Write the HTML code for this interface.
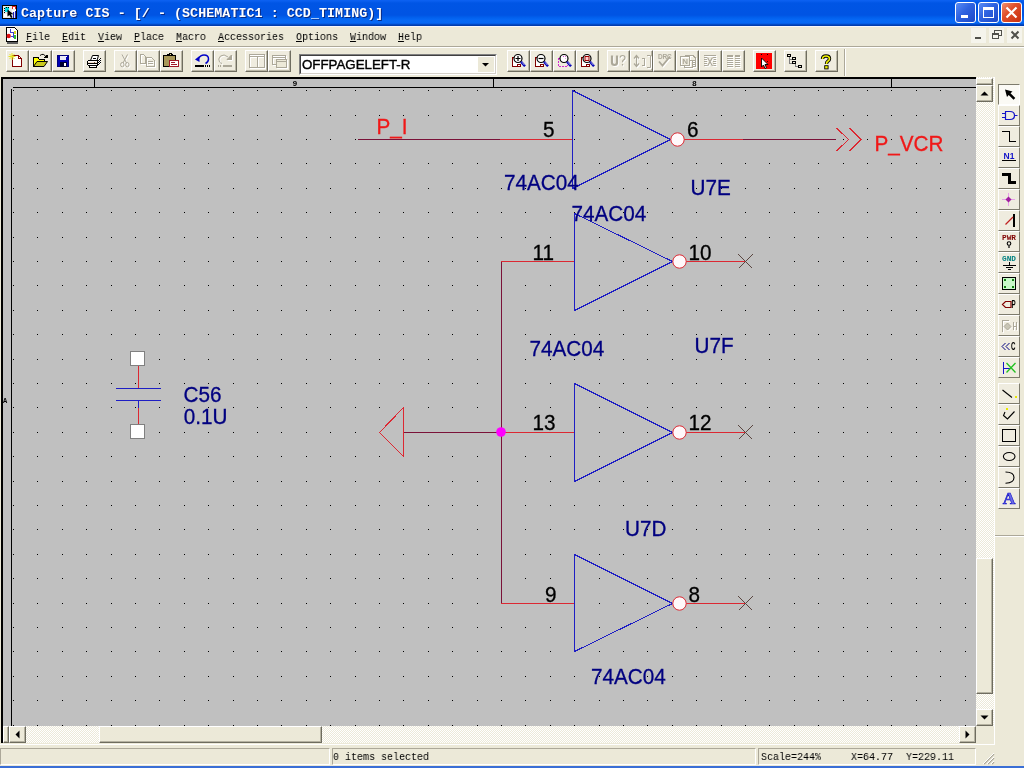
<!DOCTYPE html><html><head><meta charset="utf-8"><title>Capture CIS</title><style>
*{margin:0;padding:0;box-sizing:border-box}
html,body{width:1024px;height:768px;overflow:hidden;background:#ece9d8}
body{position:relative;font-family:"Liberation Mono","Noto Sans CJK SC",monospace;font-size:12px;color:#000}
.abs{position:absolute}
#title{left:0;top:0;width:1024px;height:26px;background:linear-gradient(to bottom,#0c62f3 0,#0a5eee 1px,#0055e5 3px,#0054e3 15px,#0262ef 18px,#0668f5 20px,#0567f4 23px,#0456dc 24px,#003cae 25px,#003cae 26px)}
#title .t{will-change:transform;left:21px;top:6px;color:#fff;font-weight:bold;font-size:13.33px;letter-spacing:.055px;line-height:16px;white-space:pre;text-shadow:1px 1px 0 #0a2a80}
.mi{will-change:transform;top:30px;height:14px;line-height:14px;font-size:11.5px;white-space:pre;transform:scaleX(.8696);transform-origin:0 0}
.mi u{text-decoration:underline;text-underline-offset:1px;text-decoration-thickness:1px}
.b{will-change:transform;position:absolute;top:50px;width:23px;height:22px;border-left:1px solid #fff;border-top:1px solid #fff;border-right:1px solid #6f6d60;border-bottom:1px solid #6f6d60;background:#efecdf;box-shadow:inset -1px -1px 0 #b9b6a5}
.b svg{position:absolute;left:2px;top:2px;width:17px;height:16px;overflow:visible}
.pb{will-change:transform;position:absolute;left:998px;width:22px;height:21px;border-left:1px solid #fff;border-top:1px solid #fff;border-right:1px solid #7d7b6d;border-bottom:1px solid #7d7b6d;background:#efecdf}
.pb svg{position:absolute;left:2px;top:1px;width:16px;height:16px;overflow:visible}
.sb{background:#ece9d8;border-left:1px solid #fff;border-top:1px solid #fff;border-right:1px solid #6e6c5f;border-bottom:1px solid #6e6c5f;box-shadow:inset -1px -1px 0 #b5b2a1}
.st{will-change:transform;top:750px;height:14px;line-height:14px;font-size:11.5px;white-space:pre;transform:scaleX(.8696);transform-origin:0 0}
svg text{font-family:"Liberation Sans",sans-serif}
</style></head><body>
<div id="title" class="abs"><div class="abs t">Capture CIS - [/ - (SCHEMATIC1 : CCD_TIMING)]</div>
<svg class="abs" style="left:2px;top:5px" width="15" height="14" viewBox="2 5 15 14" shape-rendering="crispEdges"><rect x="2.500" y="5.500" width="14" height="13" fill="#e8e8e8" stroke="#000"/><rect x="5" y="7" width="4" height="5" fill="#00e0e8"/><path d="M4 8h1M4 10h1M4 12h1M6 6.500v1M8 6.500v1" stroke="#000"/><rect x="12" y="6" width="4" height="3" fill="#e02020"/><rect x="13" y="7" width="2" height="2" fill="#fff"/><rect x="12" y="10" width="4" height="2" fill="#fff"/><rect x="13" y="12" width="1" height="6" fill="#2020c0"/><rect x="15" y="11" width="1" height="7" fill="#2020c0"/><path d="M7.500 9.500v7l2-1.500l1.500 3l1.500-.700l-1.500-3h2.500z" fill="#000" shape-rendering="geometricPrecision"/><rect x="4" y="14" width="3" height="3" fill="#fff"/></svg><div class="abs" style="left:955px;top:2px;width:21px;height:21px;border:1px solid #fff;border-radius:3px;background:linear-gradient(135deg,#5a8cf5 0,#2e62e0 45%,#1c48c8 100%)"><div class="abs" style="left:5px;top:12px;width:7px;height:3px;background:#fff"></div></div><div class="abs" style="left:978px;top:2px;width:21px;height:21px;border:1px solid #fff;border-radius:3px;background:linear-gradient(135deg,#5a8cf5 0,#2e62e0 45%,#1c48c8 100%)"><div class="abs" style="left:4px;top:4px;width:11px;height:11px;border:1px solid #fff;border-top-width:3px"></div></div><div class="abs" style="left:1001px;top:2px;width:21px;height:21px;border:1px solid #fff;border-radius:3px;background:linear-gradient(135deg,#f09070 0,#e0502c 40%,#c83010 100%)"><svg class="abs" style="left:0;top:0" width="19" height="19"><path d="M4.500 4.500l10 10M14.500 4.500l-10 10" stroke="#fff" stroke-width="2.200"/></svg></div>
</div>
<div class="abs" style="left:0;top:26px;width:1024px;height:1px;background:#f6f6fb"></div><div class="abs" style="left:0;top:27px;width:1024px;height:19px;background:#ece9d8"></div>
<svg class="abs" style="left:5px;top:27px" width="14" height="17" viewBox="5 27 14 17" shape-rendering="crispEdges"><rect x="7" y="42" width="11" height="2" fill="#606060"/><path d="M6.500 27.500h8l2.500 2.500v11.500h-10.500z" fill="#fff" stroke="#000"/><circle cx="8.700" cy="36" r="2.200" fill="#e01010" shape-rendering="geometricPrecision"/><path d="M10.500 29v3h2.500v6M11 36h2" fill="none" stroke="#4040d0"/><rect x="14" y="31" width="2" height="3" fill="#d8d820"/><rect x="14" y="35" width="2" height="4" fill="#30c030"/></svg>
<div class="abs mi" style="left:26px"><u>F</u>ile</div>
<div class="abs mi" style="left:62px"><u>E</u>dit</div>
<div class="abs mi" style="left:98px"><u>V</u>iew</div>
<div class="abs mi" style="left:134px"><u>P</u>lace</div>
<div class="abs mi" style="left:176px"><u>M</u>acro</div>
<div class="abs mi" style="left:218px"><u>A</u>ccessories</div>
<div class="abs mi" style="left:296px"><u>O</u>ptions</div>
<div class="abs mi" style="left:350px"><u>W</u>indow</div>
<div class="abs mi" style="left:398px"><u>H</u>elp</div>
<div class="abs" style="left:971px;top:28px;width:15px;height:15px;background:#f5f4ec"></div><div class="abs" style="left:989px;top:28px;width:15px;height:15px;background:#f5f4ec"></div><div class="abs" style="left:1007px;top:28px;width:15px;height:15px;background:#f5f4ec"></div><svg class="abs" style="left:970px;top:27px" width="54" height="18" viewBox="970 27 54 18" shape-rendering="crispEdges"><rect x="975" y="37" width="6" height="2" fill="#50504a"/><path d="M994.500 33v-2.500h6.500v5h-2" fill="none" stroke="#50504a"/><rect x="994" y="30" width="7" height="1" fill="#50504a"/><rect x="992.500" y="33.500" width="6" height="5" fill="none" stroke="#50504a"/><rect x="992" y="33" width="7" height="2" fill="#50504a"/><path d="M1011.500 31.500l7 7M1018.500 31.500l-7 7" stroke="#50504a" stroke-width="2" shape-rendering="geometricPrecision"/></svg>
<div class="abs" style="left:0;top:46px;width:1024px;height:1px;background:#aca899"></div>
<div class="abs" style="left:0;top:47px;width:1024px;height:1px;background:#fff"></div>
<div class="abs" style="left:0;top:48px;width:1024px;height:29px;background:#ece9d8"></div>
<div class="b" style="left:6px"><svg style="position:absolute;left:-1px;top:-1px;width:23px;height:22px" viewBox="6 50 23 22" shape-rendering="crispEdges"><path d="M12.5 55.5h6l3 3v8h-9z" fill="#fff" stroke="#800000"/><path d="M18.5 55.5v3h3" fill="none" stroke="#800000"/><rect x="18" y="64" width="3" height="2" fill="#fff"/><path d="M9.5 54l5 5M14.5 54l-5 5M12 53v7M8.5 56.5h7" stroke="#e6e61e" fill="none" shape-rendering="geometricPrecision"/></svg></div>
<div class="b" style="left:29px"><svg style="position:absolute;left:-1px;top:-1px;width:23px;height:22px" viewBox="29 50 23 22" shape-rendering="crispEdges"><path d="M33.5 66.5V57.5h4.5l1 1.5h5.5v3" fill="#ffff00" stroke="#000"/><path d="M33.5 66.5l3.5-5h10.500l-3.500 5z" fill="#c8c81e" stroke="#000" shape-rendering="geometricPrecision"/><path d="M40 55.500q3.500-3 6 1.500" fill="none" stroke="#000" shape-rendering="geometricPrecision"/><path d="M44 57.5h3.500v-3z" fill="#000"/></svg></div>
<div class="b" style="left:52px"><svg style="position:absolute;left:-1px;top:-1px;width:23px;height:22px" viewBox="52 50 23 22" shape-rendering="crispEdges"><rect x="57" y="55" width="12" height="12" fill="#0000b4"/><rect x="57" y="55" width="12" height="12" fill="none" stroke="#000078" stroke-width="1" transform="translate(.5,.5) scale(.9167)" transform-origin="57 55"/><rect x="60" y="56" width="6" height="4" fill="#e8e8f8"/><rect x="66" y="56" width="1" height="1" fill="#fff"/><rect x="60" y="62" width="7" height="5" fill="#000030"/><rect x="64" y="63" width="2" height="3" fill="#fff"/></svg></div>
<div class="b" style="left:83px"><svg style="position:absolute;left:-1px;top:-1px;width:23px;height:22px" viewBox="83 50 23 22" shape-rendering="crispEdges"><defs><pattern id="chk" width="2" height="2" patternUnits="userSpaceOnUse"><rect width="2" height="2" fill="#fff"/><rect width="1" height="1" fill="#000"/><rect x="1" y="1" width="1" height="1" fill="#000"/></pattern></defs><path d="M97 60.500l2.500-3h1.500v5.500l-3.500 4.500z" fill="url(#chk)"/><path d="M90.500 60.500l2-5h6l-1.500 5z" fill="#fff" stroke="#000" shape-rendering="geometricPrecision"/><rect x="93" y="58" width="3" height="1" fill="#000"/><path d="M88.500 60.500h9v5h-9l-1-1v-3z" fill="#fff" stroke="#000"/><rect x="88" y="62" width="9" height="1" fill="#f4e0d0"/><rect x="88" y="63" width="9" height="1" fill="#000"/><rect x="94" y="62" width="1" height="1" fill="#806040"/><rect x="89.500" y="65.500" width="7" height="2" fill="#fff" stroke="#000"/></svg></div>
<div class="b" style="left:114px"><svg style="position:absolute;left:-1px;top:-1px;width:23px;height:22px" viewBox="114 50 23 22" shape-rendering="crispEdges"><g shape-rendering="geometricPrecision"><g transform="translate(1,1)" fill="none" stroke="#fff"><path d="M122 54.500l4.500 8.500M127.500 54.500l-4.500 8.500"/><ellipse cx="122.300" cy="64.700" rx="1.700" ry="2.200"/><ellipse cx="127.300" cy="64.700" rx="1.700" ry="2.200"/></g><g fill="none" stroke="#aca899"><path d="M122 54.500l4.500 8.500M127.500 54.500l-4.500 8.500"/><ellipse cx="122.300" cy="64.700" rx="1.700" ry="2.200"/><ellipse cx="127.300" cy="64.700" rx="1.700" ry="2.200"/></g></g></svg></div>
<div class="b" style="left:137px"><svg style="position:absolute;left:-1px;top:-1px;width:23px;height:22px" viewBox="137 50 23 22" shape-rendering="crispEdges"><g transform="translate(1,1)" fill="none" stroke="#fff"><path d="M140.500 54.500h3l2 2v6.500h-5z"/><path d="M146.500 57.500h5l3 3v6h-8z"/><path d="M148 61.500h5M148 63.500h5"/></g><g fill="none" stroke="#aca899"><path d="M140.500 54.500h3l2 2v6.500h-5z"/><path d="M146.500 57.500h5l3 3v6h-8z"/><path d="M148 61.500h5M148 63.500h5"/></g></svg></div>
<div class="b" style="left:160px"><svg style="position:absolute;left:-1px;top:-1px;width:23px;height:22px" viewBox="160 50 23 22" shape-rendering="crispEdges"><rect x="163.500" y="55.500" width="12" height="11" fill="#a8985a" stroke="#000"/><path d="M167.500 55.500v-1.500h1.500v-1h2v1h1.500v1.500z" fill="#e8dca0" stroke="#000"/><rect x="169.500" y="60.500" width="9" height="6" fill="#fff" stroke="#a01828"/><path d="M171 62.500h4M171 64.500h6" stroke="#a01828"/></svg></div>
<div class="b" style="left:191px"><svg style="position:absolute;left:-1px;top:-1px;width:23px;height:22px" viewBox="191 50 23 22" shape-rendering="crispEdges"><g shape-rendering="geometricPrecision"><path d="M198.500 58.500q2-3.500 5.500-3.500q4.500 0 4.500 4q0 3-3 4.500" fill="none" stroke="#0000c8" stroke-width="1.500"/><path d="M195 59.500l4.500-3.500v6z" fill="#0000c8"/></g><rect x="195" y="65" width="9" height="2" fill="#000"/><rect x="205" y="65" width="1" height="2" fill="#000"/><rect x="207" y="65" width="1" height="2" fill="#000"/><rect x="209" y="65" width="1" height="2" fill="#000"/></svg></div>
<div class="b" style="left:214px"><svg style="position:absolute;left:-1px;top:-1px;width:23px;height:22px" viewBox="214 50 23 22" shape-rendering="crispEdges"><g shape-rendering="geometricPrecision"><g transform="translate(1,1)" fill="none" stroke="#fff"><path d="M228 57q-4-3.500-7.500-1q-3 3-1 6q1 1 2.500 1.500"/><path d="M231.500 55v4.500h-4.500z" fill="#aca899"/></g><g fill="none" stroke="#aca899"><path d="M228 57q-4-3.500-7.500-1q-3 3-1 6q1 1 2.500 1.500"/><path d="M231.500 55v4.500h-4.500z" fill="#aca899"/></g></g><rect x="223" y="65" width="9" height="2" fill="#aca899"/><rect x="218" y="65" width="1" height="2" fill="#aca899"/><rect x="220" y="65" width="1" height="2" fill="#aca899"/></svg></div>
<div class="b" style="left:245px"><svg style="position:absolute;left:-1px;top:-1px;width:23px;height:22px" viewBox="245 50 23 22" shape-rendering="crispEdges"><g transform="translate(1,1)" fill="none" stroke="#fff"><rect x="249.500" y="54.500" width="15" height="13"/><path d="M249 56h16M257.500 57v10"/></g><g fill="none" stroke="#aca899"><rect x="249.500" y="54.500" width="15" height="13"/><path d="M249 56h16M257.500 57v10"/></g></svg></div>
<div class="b" style="left:268px"><svg style="position:absolute;left:-1px;top:-1px;width:23px;height:22px" viewBox="268 50 23 22" shape-rendering="crispEdges"><g transform="translate(1,1)" fill="none" stroke="#fff"><rect x="272.500" y="55.500" width="13" height="9"/><path d="M272 57h14"/><rect x="276.500" y="59.500" width="10" height="8" fill="#ece9d8"/><path d="M276 61h11"/></g><g fill="none" stroke="#aca899"><rect x="272.500" y="55.500" width="13" height="9"/><path d="M272 57h14"/><rect x="276.500" y="59.500" width="10" height="8" fill="#ece9d8"/><path d="M276 61h11"/></g></svg></div>
<div class="b" style="left:507px"><svg style="position:absolute;left:-1px;top:-1px;width:23px;height:22px" viewBox="507 50 23 22" shape-rendering="crispEdges"><path d="M515 57.500h-2.500v9h8v-3" fill="#fff" stroke="#800000"/><rect x="517.5" y="64.500" width="3" height="2" fill="#fff" stroke="#800000"/><g shape-rendering="geometricPrecision"><circle cx="518" cy="58.500" r="4" fill="#fff" stroke="#000" stroke-width="1.200"/><path d="M515.500 58.500h5M518 56v5" stroke="#000" stroke-width="1.200"/><path d="M521 61.800l4 4.500" stroke="#0000b4" stroke-width="2.400" fill="none"/><path d="M522 62.300l2.500 2.800" stroke="#dcdcff" stroke-width=".8" fill="none"/></g></svg></div>
<div class="b" style="left:530px"><svg style="position:absolute;left:-1px;top:-1px;width:23px;height:22px" viewBox="530 50 23 22" shape-rendering="crispEdges"><path d="M538 57.500h-2.500v9h8v-3" fill="#fff" stroke="#800000"/><rect x="540.5" y="64.500" width="3" height="2" fill="#fff" stroke="#800000"/><g shape-rendering="geometricPrecision"><circle cx="541" cy="58.500" r="4" fill="#fff" stroke="#000" stroke-width="1.200"/><path d="M538.500 58.500h5" stroke="#000" stroke-width="1.200"/><path d="M544 61.800l4 4.500" stroke="#0000b4" stroke-width="2.400" fill="none"/><path d="M545 62.300l2.500 2.800" stroke="#dcdcff" stroke-width=".8" fill="none"/></g></svg></div>
<div class="b" style="left:553px"><svg style="position:absolute;left:-1px;top:-1px;width:23px;height:22px" viewBox="553 50 23 22" shape-rendering="crispEdges"><rect x="558.500" y="58.500" width="9" height="8" fill="none" stroke="#d028d0" stroke-dasharray="1.500 1.500"/><g shape-rendering="geometricPrecision"><circle cx="564" cy="58.500" r="4" fill="#fff" stroke="#000" stroke-width="1.200"/><path d="M563 56.500h2.500v2" stroke="#d040d0" stroke-width="1" stroke-dasharray="1 1" fill="none"/><path d="M567 61.800l4 4.500" stroke="#0000b4" stroke-width="2.400" fill="none"/><path d="M568 62.300l2.500 2.800" stroke="#dcdcff" stroke-width=".8" fill="none"/></g></svg></div>
<div class="b" style="left:576px"><svg style="position:absolute;left:-1px;top:-1px;width:23px;height:22px" viewBox="576 50 23 22" shape-rendering="crispEdges"><path d="M584 57.500h-2.500v9h8v-3" fill="#fff" stroke="#800000"/><rect x="586.5" y="64.500" width="3" height="2" fill="#fff" stroke="#800000"/><g shape-rendering="geometricPrecision"><circle cx="587" cy="58.500" r="4" fill="#fff" stroke="#000" stroke-width="1.200"/><rect x="585" y="56.500" width="4" height="4" fill="#ffd0d0" stroke="#a00000"/><path d="M590 61.800l4 4.500" stroke="#0000b4" stroke-width="2.400" fill="none"/><path d="M591 62.300l2.500 2.800" stroke="#dcdcff" stroke-width=".8" fill="none"/></g></svg></div>
<div class="b" style="left:607px"><svg style="position:absolute;left:-1px;top:-1px;width:23px;height:22px" viewBox="607 50 23 22" shape-rendering="crispEdges"><g shape-rendering="geometricPrecision"><g transform="translate(1,1)" fill="none" stroke="#fff"><path d="M612 55.500v7q0 2.500 2.500 2.500q2.500 0 2.500-2.500v-7" stroke-width="2.200"/><path d="M620 57.500q.5-2 2.500-2q2.500 0 2.500 2.200q0 1.500-1.500 2.300q-1 .7-1 2.200M622.500 64v1.500" stroke-width="1.200"/></g><g fill="none" stroke="#aca899"><path d="M612 55.500v7q0 2.500 2.500 2.500q2.500 0 2.500-2.500v-7" stroke-width="2.200"/><path d="M620 57.500q.5-2 2.500-2q2.500 0 2.500 2.200q0 1.500-1.500 2.300q-1 .7-1 2.200M622.500 64v1.500" stroke-width="1.200"/></g></g></svg></div>
<div class="b" style="left:630px"><svg style="position:absolute;left:-1px;top:-1px;width:23px;height:22px" viewBox="630 50 23 22" shape-rendering="crispEdges"><g shape-rendering="geometricPrecision"><g transform="translate(1,1)" fill="none" stroke="#fff"><path d="M636.500 56v10M634 58.500l2.500-3l2.500 3M634 63.500l2.500 3l2.500-3" stroke-width="1.200"/><path d="M642 58.500h3M642 65.500h3M644.500 58.500v7M647 55.500h3.500v12h-3.500"/></g><g fill="none" stroke="#aca899"><path d="M636.500 56v10M634 58.500l2.500-3l2.500 3M634 63.500l2.500 3l2.500-3" stroke-width="1.200"/><path d="M642 58.500h3M642 65.500h3M644.500 58.500v7M647 55.500h3.500v12h-3.500"/></g></g></svg></div>
<div class="b" style="left:653px"><svg style="position:absolute;left:-1px;top:-1px;width:23px;height:22px" viewBox="653 50 23 22" shape-rendering="crispEdges"><g shape-rendering="geometricPrecision"><g transform="translate(1,1)" fill="none" stroke="#fff"><path d="M659 61.500l3.500 4l7.500-9" stroke-width="1.800"/></g><g fill="none" stroke="#aca899"><path d="M659 61.500l3.500 4l7.500-9" stroke-width="1.800"/></g></g><text x="658" y="59" font-size="6.500" font-weight="bold" fill="#aca899" style="font-family:'Liberation Sans',sans-serif" letter-spacing="-.2">DRC</text></svg></div>
<div class="b" style="left:676px"><svg style="position:absolute;left:-1px;top:-1px;width:23px;height:22px" viewBox="676 50 23 22" shape-rendering="crispEdges"><g transform="translate(1,1)" fill="none" stroke="#fff"><path d="M685.500 56.500v-1.500h7l3 3v8.500h-3"/><rect x="680.500" y="56.500" width="9" height="9"/><path d="M689.500 60.500h3v7h-8v-2"/><path d="M693 60.500h2M693 62.500h2M693 64.500h2"/></g><g fill="none" stroke="#aca899"><path d="M685.500 56.500v-1.500h7l3 3v8.500h-3"/><rect x="680.500" y="56.500" width="9" height="9"/><path d="M689.500 60.500h3v7h-8v-2"/><path d="M693 60.500h2M693 62.500h2M693 64.500h2"/></g><text x="682.300" y="64" font-size="8" font-weight="bold" fill="#aca899" style="font-family:'Liberation Sans',sans-serif">N</text></svg></div>
<div class="b" style="left:699px"><svg style="position:absolute;left:-1px;top:-1px;width:23px;height:22px" viewBox="699 50 23 22" shape-rendering="crispEdges"><g transform="translate(1,1)" fill="none" stroke="#fff"><path d="M704 55.500h12M704 57.500h3M713 57.500h3M704 59.500h3M713 59.500h3M704 61.500h3M713 61.500h3M704 63.500h3M713 63.500h3M704 65.500h3M713 65.500h3"/></g><g fill="none" stroke="#aca899"><path d="M704 55.500h12M704 57.500h3M713 57.500h3M704 59.500h3M713 59.500h3M704 61.500h3M713 61.500h3M704 63.500h3M713 63.500h3M704 65.500h3M713 65.500h3"/></g><g shape-rendering="geometricPrecision"><g transform="translate(1,1)" fill="none" stroke="#fff"><path d="M707.500 57.500l5 8.500M712.500 57.500l-5 8.500" stroke-width="1.200"/></g><g fill="none" stroke="#aca899"><path d="M707.500 57.500l5 8.500M712.500 57.500l-5 8.500" stroke-width="1.200"/></g></g></svg></div>
<div class="b" style="left:722px"><svg style="position:absolute;left:-1px;top:-1px;width:23px;height:22px" viewBox="722 50 23 22" shape-rendering="crispEdges"><g transform="translate(1,1)" fill="none" stroke="#fff"><path d="M727 55.500h5.500M734.500 55.500h5.500M727 56.500h5.500M734.500 56.500h5.500M727 58.500h5.500M734.500 58.500h5.500M727 60.500h5.500M734.500 60.500h5.500M727 62.500h5.500M734.500 62.500h5.500M727 64.500h5.500M734.500 64.500h5.500M727 66.500h5.500M734.500 66.500h5.500"/></g><g fill="none" stroke="#aca899"><path d="M727 55.500h5.500M734.500 55.500h5.500M727 56.500h5.500M734.500 56.500h5.500M727 58.500h5.500M734.500 58.500h5.500M727 60.500h5.500M734.500 60.500h5.500M727 62.500h5.500M734.500 62.500h5.500M727 64.500h5.500M734.500 64.500h5.500M727 66.500h5.500M734.500 66.500h5.500"/></g></svg></div>
<div class="b" style="left:753px"><svg style="position:absolute;left:-1px;top:-1px;width:23px;height:22px" viewBox="753 50 23 22" shape-rendering="crispEdges"><rect x="756" y="53" width="16" height="16" fill="#ff0000"/><rect x="761" y="54" width="1" height="1" fill="#000"/><rect x="767" y="54" width="1" height="1" fill="#000"/><rect x="767" y="61" width="1" height="1" fill="#300"/><path d="M761.500 58v9l2-2l1.500 3.500l1.500-.7l-1.500-3.300h3z" fill="#fff" stroke="#000" stroke-width=".9" shape-rendering="geometricPrecision"/></svg></div>
<div class="b" style="left:784px"><svg style="position:absolute;left:-1px;top:-1px;width:23px;height:22px" viewBox="784 50 23 22" shape-rendering="crispEdges"><path d="M789.500 57v6.500h4M789.500 59.500h4M795.500 63.500v3h4" fill="none" stroke="#808080"/><rect x="787.5" y="54.5" width="3" height="2" fill="#ece9d8" stroke="#000"/><rect x="792.5" y="57.5" width="3" height="2" fill="#ece9d8" stroke="#000"/><rect x="792.5" y="61.5" width="3" height="2" fill="#ece9d8" stroke="#000"/><rect x="798.5" y="65.5" width="3" height="2" fill="#ece9d8" stroke="#000"/></svg></div>
<div class="b" style="left:815px"><svg style="position:absolute;left:-1px;top:-1px;width:23px;height:22px" viewBox="815 50 23 22" shape-rendering="crispEdges"><g shape-rendering="geometricPrecision"><path d="M822.500 59q0-3 3.500-3q3.500 0 3.500 2.700q0 1.600-1.700 2.600q-1.300.8-1.300 2.700" fill="none" stroke="#000" stroke-width="3.400"/><path d="M822.500 59q0-3 3.500-3q3.500 0 3.500 2.700q0 1.600-1.700 2.600q-1.300.8-1.300 2.700" fill="none" stroke="#f0f000" stroke-width="1.600"/><rect x="824.700" y="65.700" width="3.400" height="3.200" fill="#f0f000" stroke="#000" stroke-width=".9"/></g></svg></div>
<div class="abs" style="will-change:transform;left:299px;top:54px;width:198px;height:21px;background:#fff;border-top:1px solid #808080;border-left:1px solid #808080;border-right:1px solid #fff;border-bottom:1px solid #fff"><div class="abs" style="left:0;top:0;right:0;bottom:0;border-top:1px solid #404040;border-left:1px solid #404040;border-right:1px solid #d4d0c8;border-bottom:1px solid #d4d0c8"></div><div class="abs" style="left:2px;top:2px;font-family:'Liberation Sans',sans-serif;font-size:13.3px;line-height:16px;white-space:pre;-webkit-text-stroke:.4px #000">OFFPAGELEFT-R</div><div class="abs" style="right:2px;top:2px;width:16px;height:15px;background:#ece9d8"><svg width="16" height="15" style="position:absolute;left:0;top:0"><path d="M4 6h7l-3.5 3.5z" fill="#000"/></svg></div></div>
<div class="abs" style="left:844px;top:49px;width:1px;height:27px;background:#aca899"></div><div class="abs" style="left:845px;top:49px;width:1px;height:27px;background:#fff"></div>
<svg class="abs" style="will-change:transform;left:0;top:77px" width="994" height="666" viewBox="0 77 994 666" shape-rendering="crispEdges">
<rect x="1" y="77" width="975" height="649" fill="#c0c0c0"/>
<path d="M13 90h1v1h-1zM37 90h1v1h-1zM62 90h1v1h-1zM86 90h1v1h-1zM111 90h1v1h-1zM135 90h1v1h-1zM159 90h1v1h-1zM184 90h1v1h-1zM208 90h1v1h-1zM233 90h1v1h-1zM257 90h1v1h-1zM281 90h1v1h-1zM306 90h1v1h-1zM330 90h1v1h-1zM355 90h1v1h-1zM379 90h1v1h-1zM403 90h1v1h-1zM428 90h1v1h-1zM452 90h1v1h-1zM477 90h1v1h-1zM501 90h1v1h-1zM525 90h1v1h-1zM550 90h1v1h-1zM574 90h1v1h-1zM599 90h1v1h-1zM623 90h1v1h-1zM647 90h1v1h-1zM672 90h1v1h-1zM696 90h1v1h-1zM721 90h1v1h-1zM745 90h1v1h-1zM769 90h1v1h-1zM794 90h1v1h-1zM818 90h1v1h-1zM843 90h1v1h-1zM867 90h1v1h-1zM891 90h1v1h-1zM916 90h1v1h-1zM940 90h1v1h-1zM965 90h1v1h-1zM13 115h1v1h-1zM37 115h1v1h-1zM62 115h1v1h-1zM86 115h1v1h-1zM111 115h1v1h-1zM135 115h1v1h-1zM159 115h1v1h-1zM184 115h1v1h-1zM208 115h1v1h-1zM233 115h1v1h-1zM257 115h1v1h-1zM281 115h1v1h-1zM306 115h1v1h-1zM330 115h1v1h-1zM355 115h1v1h-1zM379 115h1v1h-1zM403 115h1v1h-1zM428 115h1v1h-1zM452 115h1v1h-1zM477 115h1v1h-1zM501 115h1v1h-1zM525 115h1v1h-1zM550 115h1v1h-1zM574 115h1v1h-1zM599 115h1v1h-1zM623 115h1v1h-1zM647 115h1v1h-1zM672 115h1v1h-1zM696 115h1v1h-1zM721 115h1v1h-1zM745 115h1v1h-1zM769 115h1v1h-1zM794 115h1v1h-1zM818 115h1v1h-1zM843 115h1v1h-1zM867 115h1v1h-1zM891 115h1v1h-1zM916 115h1v1h-1zM940 115h1v1h-1zM965 115h1v1h-1zM13 139h1v1h-1zM37 139h1v1h-1zM62 139h1v1h-1zM86 139h1v1h-1zM111 139h1v1h-1zM135 139h1v1h-1zM159 139h1v1h-1zM184 139h1v1h-1zM208 139h1v1h-1zM233 139h1v1h-1zM257 139h1v1h-1zM281 139h1v1h-1zM306 139h1v1h-1zM330 139h1v1h-1zM355 139h1v1h-1zM379 139h1v1h-1zM403 139h1v1h-1zM428 139h1v1h-1zM452 139h1v1h-1zM477 139h1v1h-1zM501 139h1v1h-1zM525 139h1v1h-1zM550 139h1v1h-1zM574 139h1v1h-1zM599 139h1v1h-1zM623 139h1v1h-1zM647 139h1v1h-1zM672 139h1v1h-1zM696 139h1v1h-1zM721 139h1v1h-1zM745 139h1v1h-1zM769 139h1v1h-1zM794 139h1v1h-1zM818 139h1v1h-1zM843 139h1v1h-1zM867 139h1v1h-1zM891 139h1v1h-1zM916 139h1v1h-1zM940 139h1v1h-1zM965 139h1v1h-1zM13 163h1v1h-1zM37 163h1v1h-1zM62 163h1v1h-1zM86 163h1v1h-1zM111 163h1v1h-1zM135 163h1v1h-1zM159 163h1v1h-1zM184 163h1v1h-1zM208 163h1v1h-1zM233 163h1v1h-1zM257 163h1v1h-1zM281 163h1v1h-1zM306 163h1v1h-1zM330 163h1v1h-1zM355 163h1v1h-1zM379 163h1v1h-1zM403 163h1v1h-1zM428 163h1v1h-1zM452 163h1v1h-1zM477 163h1v1h-1zM501 163h1v1h-1zM525 163h1v1h-1zM550 163h1v1h-1zM574 163h1v1h-1zM599 163h1v1h-1zM623 163h1v1h-1zM647 163h1v1h-1zM672 163h1v1h-1zM696 163h1v1h-1zM721 163h1v1h-1zM745 163h1v1h-1zM769 163h1v1h-1zM794 163h1v1h-1zM818 163h1v1h-1zM843 163h1v1h-1zM867 163h1v1h-1zM891 163h1v1h-1zM916 163h1v1h-1zM940 163h1v1h-1zM965 163h1v1h-1zM13 188h1v1h-1zM37 188h1v1h-1zM62 188h1v1h-1zM86 188h1v1h-1zM111 188h1v1h-1zM135 188h1v1h-1zM159 188h1v1h-1zM184 188h1v1h-1zM208 188h1v1h-1zM233 188h1v1h-1zM257 188h1v1h-1zM281 188h1v1h-1zM306 188h1v1h-1zM330 188h1v1h-1zM355 188h1v1h-1zM379 188h1v1h-1zM403 188h1v1h-1zM428 188h1v1h-1zM452 188h1v1h-1zM477 188h1v1h-1zM501 188h1v1h-1zM525 188h1v1h-1zM550 188h1v1h-1zM574 188h1v1h-1zM599 188h1v1h-1zM623 188h1v1h-1zM647 188h1v1h-1zM672 188h1v1h-1zM696 188h1v1h-1zM721 188h1v1h-1zM745 188h1v1h-1zM769 188h1v1h-1zM794 188h1v1h-1zM818 188h1v1h-1zM843 188h1v1h-1zM867 188h1v1h-1zM891 188h1v1h-1zM916 188h1v1h-1zM940 188h1v1h-1zM965 188h1v1h-1zM13 212h1v1h-1zM37 212h1v1h-1zM62 212h1v1h-1zM86 212h1v1h-1zM111 212h1v1h-1zM135 212h1v1h-1zM159 212h1v1h-1zM184 212h1v1h-1zM208 212h1v1h-1zM233 212h1v1h-1zM257 212h1v1h-1zM281 212h1v1h-1zM306 212h1v1h-1zM330 212h1v1h-1zM355 212h1v1h-1zM379 212h1v1h-1zM403 212h1v1h-1zM428 212h1v1h-1zM452 212h1v1h-1zM477 212h1v1h-1zM501 212h1v1h-1zM525 212h1v1h-1zM550 212h1v1h-1zM574 212h1v1h-1zM599 212h1v1h-1zM623 212h1v1h-1zM647 212h1v1h-1zM672 212h1v1h-1zM696 212h1v1h-1zM721 212h1v1h-1zM745 212h1v1h-1zM769 212h1v1h-1zM794 212h1v1h-1zM818 212h1v1h-1zM843 212h1v1h-1zM867 212h1v1h-1zM891 212h1v1h-1zM916 212h1v1h-1zM940 212h1v1h-1zM965 212h1v1h-1zM13 237h1v1h-1zM37 237h1v1h-1zM62 237h1v1h-1zM86 237h1v1h-1zM111 237h1v1h-1zM135 237h1v1h-1zM159 237h1v1h-1zM184 237h1v1h-1zM208 237h1v1h-1zM233 237h1v1h-1zM257 237h1v1h-1zM281 237h1v1h-1zM306 237h1v1h-1zM330 237h1v1h-1zM355 237h1v1h-1zM379 237h1v1h-1zM403 237h1v1h-1zM428 237h1v1h-1zM452 237h1v1h-1zM477 237h1v1h-1zM501 237h1v1h-1zM525 237h1v1h-1zM550 237h1v1h-1zM574 237h1v1h-1zM599 237h1v1h-1zM623 237h1v1h-1zM647 237h1v1h-1zM672 237h1v1h-1zM696 237h1v1h-1zM721 237h1v1h-1zM745 237h1v1h-1zM769 237h1v1h-1zM794 237h1v1h-1zM818 237h1v1h-1zM843 237h1v1h-1zM867 237h1v1h-1zM891 237h1v1h-1zM916 237h1v1h-1zM940 237h1v1h-1zM965 237h1v1h-1zM13 261h1v1h-1zM37 261h1v1h-1zM62 261h1v1h-1zM86 261h1v1h-1zM111 261h1v1h-1zM135 261h1v1h-1zM159 261h1v1h-1zM184 261h1v1h-1zM208 261h1v1h-1zM233 261h1v1h-1zM257 261h1v1h-1zM281 261h1v1h-1zM306 261h1v1h-1zM330 261h1v1h-1zM355 261h1v1h-1zM379 261h1v1h-1zM403 261h1v1h-1zM428 261h1v1h-1zM452 261h1v1h-1zM477 261h1v1h-1zM501 261h1v1h-1zM525 261h1v1h-1zM550 261h1v1h-1zM574 261h1v1h-1zM599 261h1v1h-1zM623 261h1v1h-1zM647 261h1v1h-1zM672 261h1v1h-1zM696 261h1v1h-1zM721 261h1v1h-1zM745 261h1v1h-1zM769 261h1v1h-1zM794 261h1v1h-1zM818 261h1v1h-1zM843 261h1v1h-1zM867 261h1v1h-1zM891 261h1v1h-1zM916 261h1v1h-1zM940 261h1v1h-1zM965 261h1v1h-1zM13 285h1v1h-1zM37 285h1v1h-1zM62 285h1v1h-1zM86 285h1v1h-1zM111 285h1v1h-1zM135 285h1v1h-1zM159 285h1v1h-1zM184 285h1v1h-1zM208 285h1v1h-1zM233 285h1v1h-1zM257 285h1v1h-1zM281 285h1v1h-1zM306 285h1v1h-1zM330 285h1v1h-1zM355 285h1v1h-1zM379 285h1v1h-1zM403 285h1v1h-1zM428 285h1v1h-1zM452 285h1v1h-1zM477 285h1v1h-1zM501 285h1v1h-1zM525 285h1v1h-1zM550 285h1v1h-1zM574 285h1v1h-1zM599 285h1v1h-1zM623 285h1v1h-1zM647 285h1v1h-1zM672 285h1v1h-1zM696 285h1v1h-1zM721 285h1v1h-1zM745 285h1v1h-1zM769 285h1v1h-1zM794 285h1v1h-1zM818 285h1v1h-1zM843 285h1v1h-1zM867 285h1v1h-1zM891 285h1v1h-1zM916 285h1v1h-1zM940 285h1v1h-1zM965 285h1v1h-1zM13 310h1v1h-1zM37 310h1v1h-1zM62 310h1v1h-1zM86 310h1v1h-1zM111 310h1v1h-1zM135 310h1v1h-1zM159 310h1v1h-1zM184 310h1v1h-1zM208 310h1v1h-1zM233 310h1v1h-1zM257 310h1v1h-1zM281 310h1v1h-1zM306 310h1v1h-1zM330 310h1v1h-1zM355 310h1v1h-1zM379 310h1v1h-1zM403 310h1v1h-1zM428 310h1v1h-1zM452 310h1v1h-1zM477 310h1v1h-1zM501 310h1v1h-1zM525 310h1v1h-1zM550 310h1v1h-1zM574 310h1v1h-1zM599 310h1v1h-1zM623 310h1v1h-1zM647 310h1v1h-1zM672 310h1v1h-1zM696 310h1v1h-1zM721 310h1v1h-1zM745 310h1v1h-1zM769 310h1v1h-1zM794 310h1v1h-1zM818 310h1v1h-1zM843 310h1v1h-1zM867 310h1v1h-1zM891 310h1v1h-1zM916 310h1v1h-1zM940 310h1v1h-1zM965 310h1v1h-1zM13 334h1v1h-1zM37 334h1v1h-1zM62 334h1v1h-1zM86 334h1v1h-1zM111 334h1v1h-1zM135 334h1v1h-1zM159 334h1v1h-1zM184 334h1v1h-1zM208 334h1v1h-1zM233 334h1v1h-1zM257 334h1v1h-1zM281 334h1v1h-1zM306 334h1v1h-1zM330 334h1v1h-1zM355 334h1v1h-1zM379 334h1v1h-1zM403 334h1v1h-1zM428 334h1v1h-1zM452 334h1v1h-1zM477 334h1v1h-1zM501 334h1v1h-1zM525 334h1v1h-1zM550 334h1v1h-1zM574 334h1v1h-1zM599 334h1v1h-1zM623 334h1v1h-1zM647 334h1v1h-1zM672 334h1v1h-1zM696 334h1v1h-1zM721 334h1v1h-1zM745 334h1v1h-1zM769 334h1v1h-1zM794 334h1v1h-1zM818 334h1v1h-1zM843 334h1v1h-1zM867 334h1v1h-1zM891 334h1v1h-1zM916 334h1v1h-1zM940 334h1v1h-1zM965 334h1v1h-1zM13 359h1v1h-1zM37 359h1v1h-1zM62 359h1v1h-1zM86 359h1v1h-1zM111 359h1v1h-1zM135 359h1v1h-1zM159 359h1v1h-1zM184 359h1v1h-1zM208 359h1v1h-1zM233 359h1v1h-1zM257 359h1v1h-1zM281 359h1v1h-1zM306 359h1v1h-1zM330 359h1v1h-1zM355 359h1v1h-1zM379 359h1v1h-1zM403 359h1v1h-1zM428 359h1v1h-1zM452 359h1v1h-1zM477 359h1v1h-1zM501 359h1v1h-1zM525 359h1v1h-1zM550 359h1v1h-1zM574 359h1v1h-1zM599 359h1v1h-1zM623 359h1v1h-1zM647 359h1v1h-1zM672 359h1v1h-1zM696 359h1v1h-1zM721 359h1v1h-1zM745 359h1v1h-1zM769 359h1v1h-1zM794 359h1v1h-1zM818 359h1v1h-1zM843 359h1v1h-1zM867 359h1v1h-1zM891 359h1v1h-1zM916 359h1v1h-1zM940 359h1v1h-1zM965 359h1v1h-1zM13 383h1v1h-1zM37 383h1v1h-1zM62 383h1v1h-1zM86 383h1v1h-1zM111 383h1v1h-1zM135 383h1v1h-1zM159 383h1v1h-1zM184 383h1v1h-1zM208 383h1v1h-1zM233 383h1v1h-1zM257 383h1v1h-1zM281 383h1v1h-1zM306 383h1v1h-1zM330 383h1v1h-1zM355 383h1v1h-1zM379 383h1v1h-1zM403 383h1v1h-1zM428 383h1v1h-1zM452 383h1v1h-1zM477 383h1v1h-1zM501 383h1v1h-1zM525 383h1v1h-1zM550 383h1v1h-1zM574 383h1v1h-1zM599 383h1v1h-1zM623 383h1v1h-1zM647 383h1v1h-1zM672 383h1v1h-1zM696 383h1v1h-1zM721 383h1v1h-1zM745 383h1v1h-1zM769 383h1v1h-1zM794 383h1v1h-1zM818 383h1v1h-1zM843 383h1v1h-1zM867 383h1v1h-1zM891 383h1v1h-1zM916 383h1v1h-1zM940 383h1v1h-1zM965 383h1v1h-1zM13 407h1v1h-1zM37 407h1v1h-1zM62 407h1v1h-1zM86 407h1v1h-1zM111 407h1v1h-1zM135 407h1v1h-1zM159 407h1v1h-1zM184 407h1v1h-1zM208 407h1v1h-1zM233 407h1v1h-1zM257 407h1v1h-1zM281 407h1v1h-1zM306 407h1v1h-1zM330 407h1v1h-1zM355 407h1v1h-1zM379 407h1v1h-1zM403 407h1v1h-1zM428 407h1v1h-1zM452 407h1v1h-1zM477 407h1v1h-1zM501 407h1v1h-1zM525 407h1v1h-1zM550 407h1v1h-1zM574 407h1v1h-1zM599 407h1v1h-1zM623 407h1v1h-1zM647 407h1v1h-1zM672 407h1v1h-1zM696 407h1v1h-1zM721 407h1v1h-1zM745 407h1v1h-1zM769 407h1v1h-1zM794 407h1v1h-1zM818 407h1v1h-1zM843 407h1v1h-1zM867 407h1v1h-1zM891 407h1v1h-1zM916 407h1v1h-1zM940 407h1v1h-1zM965 407h1v1h-1zM13 432h1v1h-1zM37 432h1v1h-1zM62 432h1v1h-1zM86 432h1v1h-1zM111 432h1v1h-1zM135 432h1v1h-1zM159 432h1v1h-1zM184 432h1v1h-1zM208 432h1v1h-1zM233 432h1v1h-1zM257 432h1v1h-1zM281 432h1v1h-1zM306 432h1v1h-1zM330 432h1v1h-1zM355 432h1v1h-1zM379 432h1v1h-1zM403 432h1v1h-1zM428 432h1v1h-1zM452 432h1v1h-1zM477 432h1v1h-1zM501 432h1v1h-1zM525 432h1v1h-1zM550 432h1v1h-1zM574 432h1v1h-1zM599 432h1v1h-1zM623 432h1v1h-1zM647 432h1v1h-1zM672 432h1v1h-1zM696 432h1v1h-1zM721 432h1v1h-1zM745 432h1v1h-1zM769 432h1v1h-1zM794 432h1v1h-1zM818 432h1v1h-1zM843 432h1v1h-1zM867 432h1v1h-1zM891 432h1v1h-1zM916 432h1v1h-1zM940 432h1v1h-1zM965 432h1v1h-1zM13 456h1v1h-1zM37 456h1v1h-1zM62 456h1v1h-1zM86 456h1v1h-1zM111 456h1v1h-1zM135 456h1v1h-1zM159 456h1v1h-1zM184 456h1v1h-1zM208 456h1v1h-1zM233 456h1v1h-1zM257 456h1v1h-1zM281 456h1v1h-1zM306 456h1v1h-1zM330 456h1v1h-1zM355 456h1v1h-1zM379 456h1v1h-1zM403 456h1v1h-1zM428 456h1v1h-1zM452 456h1v1h-1zM477 456h1v1h-1zM501 456h1v1h-1zM525 456h1v1h-1zM550 456h1v1h-1zM574 456h1v1h-1zM599 456h1v1h-1zM623 456h1v1h-1zM647 456h1v1h-1zM672 456h1v1h-1zM696 456h1v1h-1zM721 456h1v1h-1zM745 456h1v1h-1zM769 456h1v1h-1zM794 456h1v1h-1zM818 456h1v1h-1zM843 456h1v1h-1zM867 456h1v1h-1zM891 456h1v1h-1zM916 456h1v1h-1zM940 456h1v1h-1zM965 456h1v1h-1zM13 481h1v1h-1zM37 481h1v1h-1zM62 481h1v1h-1zM86 481h1v1h-1zM111 481h1v1h-1zM135 481h1v1h-1zM159 481h1v1h-1zM184 481h1v1h-1zM208 481h1v1h-1zM233 481h1v1h-1zM257 481h1v1h-1zM281 481h1v1h-1zM306 481h1v1h-1zM330 481h1v1h-1zM355 481h1v1h-1zM379 481h1v1h-1zM403 481h1v1h-1zM428 481h1v1h-1zM452 481h1v1h-1zM477 481h1v1h-1zM501 481h1v1h-1zM525 481h1v1h-1zM550 481h1v1h-1zM574 481h1v1h-1zM599 481h1v1h-1zM623 481h1v1h-1zM647 481h1v1h-1zM672 481h1v1h-1zM696 481h1v1h-1zM721 481h1v1h-1zM745 481h1v1h-1zM769 481h1v1h-1zM794 481h1v1h-1zM818 481h1v1h-1zM843 481h1v1h-1zM867 481h1v1h-1zM891 481h1v1h-1zM916 481h1v1h-1zM940 481h1v1h-1zM965 481h1v1h-1zM13 505h1v1h-1zM37 505h1v1h-1zM62 505h1v1h-1zM86 505h1v1h-1zM111 505h1v1h-1zM135 505h1v1h-1zM159 505h1v1h-1zM184 505h1v1h-1zM208 505h1v1h-1zM233 505h1v1h-1zM257 505h1v1h-1zM281 505h1v1h-1zM306 505h1v1h-1zM330 505h1v1h-1zM355 505h1v1h-1zM379 505h1v1h-1zM403 505h1v1h-1zM428 505h1v1h-1zM452 505h1v1h-1zM477 505h1v1h-1zM501 505h1v1h-1zM525 505h1v1h-1zM550 505h1v1h-1zM574 505h1v1h-1zM599 505h1v1h-1zM623 505h1v1h-1zM647 505h1v1h-1zM672 505h1v1h-1zM696 505h1v1h-1zM721 505h1v1h-1zM745 505h1v1h-1zM769 505h1v1h-1zM794 505h1v1h-1zM818 505h1v1h-1zM843 505h1v1h-1zM867 505h1v1h-1zM891 505h1v1h-1zM916 505h1v1h-1zM940 505h1v1h-1zM965 505h1v1h-1zM13 529h1v1h-1zM37 529h1v1h-1zM62 529h1v1h-1zM86 529h1v1h-1zM111 529h1v1h-1zM135 529h1v1h-1zM159 529h1v1h-1zM184 529h1v1h-1zM208 529h1v1h-1zM233 529h1v1h-1zM257 529h1v1h-1zM281 529h1v1h-1zM306 529h1v1h-1zM330 529h1v1h-1zM355 529h1v1h-1zM379 529h1v1h-1zM403 529h1v1h-1zM428 529h1v1h-1zM452 529h1v1h-1zM477 529h1v1h-1zM501 529h1v1h-1zM525 529h1v1h-1zM550 529h1v1h-1zM574 529h1v1h-1zM599 529h1v1h-1zM623 529h1v1h-1zM647 529h1v1h-1zM672 529h1v1h-1zM696 529h1v1h-1zM721 529h1v1h-1zM745 529h1v1h-1zM769 529h1v1h-1zM794 529h1v1h-1zM818 529h1v1h-1zM843 529h1v1h-1zM867 529h1v1h-1zM891 529h1v1h-1zM916 529h1v1h-1zM940 529h1v1h-1zM965 529h1v1h-1zM13 554h1v1h-1zM37 554h1v1h-1zM62 554h1v1h-1zM86 554h1v1h-1zM111 554h1v1h-1zM135 554h1v1h-1zM159 554h1v1h-1zM184 554h1v1h-1zM208 554h1v1h-1zM233 554h1v1h-1zM257 554h1v1h-1zM281 554h1v1h-1zM306 554h1v1h-1zM330 554h1v1h-1zM355 554h1v1h-1zM379 554h1v1h-1zM403 554h1v1h-1zM428 554h1v1h-1zM452 554h1v1h-1zM477 554h1v1h-1zM501 554h1v1h-1zM525 554h1v1h-1zM550 554h1v1h-1zM574 554h1v1h-1zM599 554h1v1h-1zM623 554h1v1h-1zM647 554h1v1h-1zM672 554h1v1h-1zM696 554h1v1h-1zM721 554h1v1h-1zM745 554h1v1h-1zM769 554h1v1h-1zM794 554h1v1h-1zM818 554h1v1h-1zM843 554h1v1h-1zM867 554h1v1h-1zM891 554h1v1h-1zM916 554h1v1h-1zM940 554h1v1h-1zM965 554h1v1h-1zM13 578h1v1h-1zM37 578h1v1h-1zM62 578h1v1h-1zM86 578h1v1h-1zM111 578h1v1h-1zM135 578h1v1h-1zM159 578h1v1h-1zM184 578h1v1h-1zM208 578h1v1h-1zM233 578h1v1h-1zM257 578h1v1h-1zM281 578h1v1h-1zM306 578h1v1h-1zM330 578h1v1h-1zM355 578h1v1h-1zM379 578h1v1h-1zM403 578h1v1h-1zM428 578h1v1h-1zM452 578h1v1h-1zM477 578h1v1h-1zM501 578h1v1h-1zM525 578h1v1h-1zM550 578h1v1h-1zM574 578h1v1h-1zM599 578h1v1h-1zM623 578h1v1h-1zM647 578h1v1h-1zM672 578h1v1h-1zM696 578h1v1h-1zM721 578h1v1h-1zM745 578h1v1h-1zM769 578h1v1h-1zM794 578h1v1h-1zM818 578h1v1h-1zM843 578h1v1h-1zM867 578h1v1h-1zM891 578h1v1h-1zM916 578h1v1h-1zM940 578h1v1h-1zM965 578h1v1h-1zM13 603h1v1h-1zM37 603h1v1h-1zM62 603h1v1h-1zM86 603h1v1h-1zM111 603h1v1h-1zM135 603h1v1h-1zM159 603h1v1h-1zM184 603h1v1h-1zM208 603h1v1h-1zM233 603h1v1h-1zM257 603h1v1h-1zM281 603h1v1h-1zM306 603h1v1h-1zM330 603h1v1h-1zM355 603h1v1h-1zM379 603h1v1h-1zM403 603h1v1h-1zM428 603h1v1h-1zM452 603h1v1h-1zM477 603h1v1h-1zM501 603h1v1h-1zM525 603h1v1h-1zM550 603h1v1h-1zM574 603h1v1h-1zM599 603h1v1h-1zM623 603h1v1h-1zM647 603h1v1h-1zM672 603h1v1h-1zM696 603h1v1h-1zM721 603h1v1h-1zM745 603h1v1h-1zM769 603h1v1h-1zM794 603h1v1h-1zM818 603h1v1h-1zM843 603h1v1h-1zM867 603h1v1h-1zM891 603h1v1h-1zM916 603h1v1h-1zM940 603h1v1h-1zM965 603h1v1h-1zM13 627h1v1h-1zM37 627h1v1h-1zM62 627h1v1h-1zM86 627h1v1h-1zM111 627h1v1h-1zM135 627h1v1h-1zM159 627h1v1h-1zM184 627h1v1h-1zM208 627h1v1h-1zM233 627h1v1h-1zM257 627h1v1h-1zM281 627h1v1h-1zM306 627h1v1h-1zM330 627h1v1h-1zM355 627h1v1h-1zM379 627h1v1h-1zM403 627h1v1h-1zM428 627h1v1h-1zM452 627h1v1h-1zM477 627h1v1h-1zM501 627h1v1h-1zM525 627h1v1h-1zM550 627h1v1h-1zM574 627h1v1h-1zM599 627h1v1h-1zM623 627h1v1h-1zM647 627h1v1h-1zM672 627h1v1h-1zM696 627h1v1h-1zM721 627h1v1h-1zM745 627h1v1h-1zM769 627h1v1h-1zM794 627h1v1h-1zM818 627h1v1h-1zM843 627h1v1h-1zM867 627h1v1h-1zM891 627h1v1h-1zM916 627h1v1h-1zM940 627h1v1h-1zM965 627h1v1h-1zM13 651h1v1h-1zM37 651h1v1h-1zM62 651h1v1h-1zM86 651h1v1h-1zM111 651h1v1h-1zM135 651h1v1h-1zM159 651h1v1h-1zM184 651h1v1h-1zM208 651h1v1h-1zM233 651h1v1h-1zM257 651h1v1h-1zM281 651h1v1h-1zM306 651h1v1h-1zM330 651h1v1h-1zM355 651h1v1h-1zM379 651h1v1h-1zM403 651h1v1h-1zM428 651h1v1h-1zM452 651h1v1h-1zM477 651h1v1h-1zM501 651h1v1h-1zM525 651h1v1h-1zM550 651h1v1h-1zM574 651h1v1h-1zM599 651h1v1h-1zM623 651h1v1h-1zM647 651h1v1h-1zM672 651h1v1h-1zM696 651h1v1h-1zM721 651h1v1h-1zM745 651h1v1h-1zM769 651h1v1h-1zM794 651h1v1h-1zM818 651h1v1h-1zM843 651h1v1h-1zM867 651h1v1h-1zM891 651h1v1h-1zM916 651h1v1h-1zM940 651h1v1h-1zM965 651h1v1h-1zM13 676h1v1h-1zM37 676h1v1h-1zM62 676h1v1h-1zM86 676h1v1h-1zM111 676h1v1h-1zM135 676h1v1h-1zM159 676h1v1h-1zM184 676h1v1h-1zM208 676h1v1h-1zM233 676h1v1h-1zM257 676h1v1h-1zM281 676h1v1h-1zM306 676h1v1h-1zM330 676h1v1h-1zM355 676h1v1h-1zM379 676h1v1h-1zM403 676h1v1h-1zM428 676h1v1h-1zM452 676h1v1h-1zM477 676h1v1h-1zM501 676h1v1h-1zM525 676h1v1h-1zM550 676h1v1h-1zM574 676h1v1h-1zM599 676h1v1h-1zM623 676h1v1h-1zM647 676h1v1h-1zM672 676h1v1h-1zM696 676h1v1h-1zM721 676h1v1h-1zM745 676h1v1h-1zM769 676h1v1h-1zM794 676h1v1h-1zM818 676h1v1h-1zM843 676h1v1h-1zM867 676h1v1h-1zM891 676h1v1h-1zM916 676h1v1h-1zM940 676h1v1h-1zM965 676h1v1h-1zM13 700h1v1h-1zM37 700h1v1h-1zM62 700h1v1h-1zM86 700h1v1h-1zM111 700h1v1h-1zM135 700h1v1h-1zM159 700h1v1h-1zM184 700h1v1h-1zM208 700h1v1h-1zM233 700h1v1h-1zM257 700h1v1h-1zM281 700h1v1h-1zM306 700h1v1h-1zM330 700h1v1h-1zM355 700h1v1h-1zM379 700h1v1h-1zM403 700h1v1h-1zM428 700h1v1h-1zM452 700h1v1h-1zM477 700h1v1h-1zM501 700h1v1h-1zM525 700h1v1h-1zM550 700h1v1h-1zM574 700h1v1h-1zM599 700h1v1h-1zM623 700h1v1h-1zM647 700h1v1h-1zM672 700h1v1h-1zM696 700h1v1h-1zM721 700h1v1h-1zM745 700h1v1h-1zM769 700h1v1h-1zM794 700h1v1h-1zM818 700h1v1h-1zM843 700h1v1h-1zM867 700h1v1h-1zM891 700h1v1h-1zM916 700h1v1h-1zM940 700h1v1h-1zM965 700h1v1h-1zM13 725h1v1h-1zM37 725h1v1h-1zM62 725h1v1h-1zM86 725h1v1h-1zM111 725h1v1h-1zM135 725h1v1h-1zM159 725h1v1h-1zM184 725h1v1h-1zM208 725h1v1h-1zM233 725h1v1h-1zM257 725h1v1h-1zM281 725h1v1h-1zM306 725h1v1h-1zM330 725h1v1h-1zM355 725h1v1h-1zM379 725h1v1h-1zM403 725h1v1h-1zM428 725h1v1h-1zM452 725h1v1h-1zM477 725h1v1h-1zM501 725h1v1h-1zM525 725h1v1h-1zM550 725h1v1h-1zM574 725h1v1h-1zM599 725h1v1h-1zM623 725h1v1h-1zM647 725h1v1h-1zM672 725h1v1h-1zM696 725h1v1h-1zM721 725h1v1h-1zM745 725h1v1h-1zM769 725h1v1h-1zM794 725h1v1h-1zM818 725h1v1h-1zM843 725h1v1h-1zM867 725h1v1h-1zM891 725h1v1h-1zM916 725h1v1h-1zM940 725h1v1h-1zM965 725h1v1h-1z" fill="#000"/>
<rect x="1" y="77" width="975" height="2" fill="#000"/><rect x="1" y="77" width="2" height="666" fill="#000"/>
<rect x="13" y="87" width="963" height="1" fill="#000"/><rect x="11" y="89" width="1" height="637" fill="#000"/>
<rect x="94" y="79" width="1" height="8" fill="#000"/>
<rect x="493" y="79" width="1" height="8" fill="#000"/>
<rect x="891" y="79" width="1" height="8" fill="#000"/>
<text x="292.5" y="86" font-size="8" font-weight="bold" style="font-family:'Liberation Mono',monospace">9</text><text x="692" y="86" font-size="8" font-weight="bold" style="font-family:'Liberation Mono',monospace">8</text>
<text x="3" y="403" font-size="7" font-weight="bold" style="font-family:'Liberation Mono',monospace">A</text>
<rect x="358" y="139" width="142" height="1" fill="#7a1238"/>
<rect x="743" y="139" width="93" height="1" fill="#7a1238"/>
<rect x="501" y="261" width="1" height="343" fill="#7a1238"/>
<rect x="403" y="432" width="98" height="1" fill="#7a1238"/>
<rect x="500" y="139" width="73" height="1" fill="#dc2832"/>
<rect x="684" y="139" width="59" height="1" fill="#dc2832"/>
<rect x="501" y="261" width="74" height="1" fill="#dc2832"/>
<rect x="686" y="261" width="60" height="1" fill="#dc2832"/>
<rect x="502" y="432" width="73" height="1" fill="#dc2832"/>
<rect x="686" y="432" width="60" height="1" fill="#dc2832"/>
<rect x="501" y="603" width="74" height="1" fill="#dc2832"/>
<rect x="686" y="603" width="60" height="1" fill="#dc2832"/>
<path d="M572.5 90.5L670.5 139.5L572.5 188.5Z" fill="none" stroke="#1e1ec4" stroke-width="1"/>
<path d="M574.5 213.5L672.5 261.5L574.5 310.5Z" fill="none" stroke="#1e1ec4" stroke-width="1"/>
<path d="M574.5 383.5L672.5 432.5L574.5 481.5Z" fill="none" stroke="#1e1ec4" stroke-width="1"/>
<path d="M574.5 554.5L672.5 603.5L574.5 651.5Z" fill="none" stroke="#1e1ec4" stroke-width="1"/>
<circle cx="677.5" cy="139.5" r="6.7" fill="#fff8fa" stroke="#dc2832" stroke-width="1" shape-rendering="geometricPrecision"/>
<circle cx="679.5" cy="261.5" r="6.7" fill="#fff8fa" stroke="#dc2832" stroke-width="1" shape-rendering="geometricPrecision"/>
<circle cx="679.5" cy="432.5" r="6.7" fill="#fff8fa" stroke="#dc2832" stroke-width="1" shape-rendering="geometricPrecision"/>
<circle cx="679.5" cy="603.5" r="6.7" fill="#fff8fa" stroke="#dc2832" stroke-width="1" shape-rendering="geometricPrecision"/>
<path d="M738.5 254.5l14 14m0 -14l-14 14" fill="none" stroke="#5a4640" stroke-width="1"/>
<path d="M738.5 425.5l14 14m0 -14l-14 14" fill="none" stroke="#5a4640" stroke-width="1"/>
<path d="M738.5 596.5l14 14m0 -14l-14 14" fill="none" stroke="#5a4640" stroke-width="1"/>
<circle cx="501" cy="432" r="4.8" fill="#ff00ff" shape-rendering="geometricPrecision"/>
<path d="M403.5 407.5L379.5 432.5L403.5 456.5" fill="none" stroke="#dc2832" stroke-width="1"/>
<rect x="403" y="407" width="1" height="50" fill="#dc2832"/>
<path d="M836.5 128L848.5 139.5L836.5 151M849.5 128L861 139.5L849.5 151" fill="none" stroke="#dc2832" stroke-width="1"/>
<rect x="138" y="365" width="1" height="23" fill="#dc2832"/>
<rect x="138" y="388" width="1" height="1" fill="#1e1ec4"/>
<rect x="116" y="388" width="45" height="1" fill="#1e1ec4"/>
<rect x="116" y="400" width="45" height="1" fill="#1e1ec4"/>
<rect x="138" y="401" width="1" height="7" fill="#1e1ec4"/>
<rect x="138" y="408" width="1" height="16" fill="#dc2832"/>
<rect x="130.5" y="351.5" width="14" height="14" fill="#fff" stroke="#808080" stroke-width="1"/>
<rect x="130.5" y="424.5" width="14" height="14" fill="#fff" stroke="#808080" stroke-width="1"/>
<text transform="translate(376.5,134) scale(.985,1.04)" font-size="21" fill="#f01818" stroke="#f01818" stroke-width=".3">P_I</text>
<text transform="translate(874.5,150.5) scale(.985,1.04)" font-size="21" fill="#f01818" stroke="#f01818" stroke-width=".3">P_VCR</text>
<text transform="translate(543,137.2) scale(.985,1.04)" font-size="21" fill="#000" stroke="#000" stroke-width=".3">5</text>
<text transform="translate(687,137) scale(.985,1.04)" font-size="21" fill="#000" stroke="#000" stroke-width=".3">6</text>
<text transform="translate(532.5,259.7) scale(.985,1.04)" font-size="21" fill="#000" stroke="#000" stroke-width=".3">11</text>
<text transform="translate(688.5,259.7) scale(.985,1.04)" font-size="21" fill="#000" stroke="#000" stroke-width=".3">10</text>
<text transform="translate(532.5,430) scale(.985,1.04)" font-size="21" fill="#000" stroke="#000" stroke-width=".3">13</text>
<text transform="translate(688.5,430) scale(.985,1.04)" font-size="21" fill="#000" stroke="#000" stroke-width=".3">12</text>
<text transform="translate(545,601.7) scale(.985,1.04)" font-size="21" fill="#000" stroke="#000" stroke-width=".3">9</text>
<text transform="translate(688.6,601.7) scale(.985,1.04)" font-size="21" fill="#000" stroke="#000" stroke-width=".3">8</text>
<text transform="translate(504,189.7) scale(.985,1.04)" font-size="21" fill="#000080" stroke="#000080" stroke-width=".3">74AC04</text>
<text transform="translate(690.5,194.7) scale(.985,1.04)" font-size="21" fill="#000080" stroke="#000080" stroke-width=".3">U7E</text>
<text transform="translate(571.5,220.5) scale(.985,1.04)" font-size="21" fill="#000080" stroke="#000080" stroke-width=".3">74AC04</text>
<text transform="translate(529.5,355.5) scale(.985,1.04)" font-size="21" fill="#000080" stroke="#000080" stroke-width=".3">74AC04</text>
<text transform="translate(694.5,352.5) scale(.985,1.04)" font-size="21" fill="#000080" stroke="#000080" stroke-width=".3">U7F</text>
<text transform="translate(625,536) scale(.985,1.04)" font-size="21" fill="#000080" stroke="#000080" stroke-width=".3">U7D</text>
<text transform="translate(591,684) scale(.985,1.04)" font-size="21" fill="#000080" stroke="#000080" stroke-width=".3">74AC04</text>
<text transform="translate(183.6,401.6) scale(.985,1.04)" font-size="21" fill="#000080" stroke="#000080" stroke-width=".3">C56</text>
<text transform="translate(183.8,423.7) scale(.985,1.04)" font-size="21" fill="#000080" stroke="#000080" stroke-width=".3">0.1U</text>
</svg>
<div class="abs" style="left:976px;top:77px;width:18px;height:649px;background:repeating-conic-gradient(#ffffff 0 25%,#ece9d8 0 50%) 0 0/2px 2px"></div>
<div class="abs sb" style="left:976px;top:78px;width:17px;height:7px"></div>
<div class="abs sb" style="left:976px;top:85px;width:17px;height:17px"><svg width="15" height="15"><path d="M3.5 9.5h8l-4-4z" fill="#000"/></svg></div>
<div class="abs sb" style="left:976px;top:558px;width:17px;height:136px"></div>
<div class="abs sb" style="left:976px;top:709px;width:17px;height:17px"><svg width="15" height="15"><path d="M3.5 5.5h8l-4 4z" fill="#000"/></svg></div>
<div class="abs" style="left:3px;top:726px;width:973px;height:17px;background:repeating-conic-gradient(#ffffff 0 25%,#ece9d8 0 50%) 0 0/2px 2px"></div>
<div class="abs sb" style="left:3px;top:726px;width:6px;height:17px"></div>
<div class="abs sb" style="left:9px;top:726px;width:17px;height:17px"><svg width="15" height="15"><path d="M9.5 3.5v8l-4-4z" fill="#000"/></svg></div>
<div class="abs sb" style="left:99px;top:726px;width:223px;height:17px"></div>
<div class="abs sb" style="left:959px;top:726px;width:17px;height:17px"><svg width="15" height="15"><path d="M5.5 3.5v8l4-4z" fill="#000"/></svg></div>
<div class="abs" style="left:976px;top:726px;width:18px;height:17px;background:#ece9d8"></div>
<div class="abs" style="left:994px;top:77px;width:30px;height:689px;background:#ece9d8"></div>
<div class="abs" style="left:994px;top:77px;width:1px;height:668px;background:#fff"></div>
<div class="abs" style="left:0px;top:744px;width:995px;height:1px;background:#fff"></div>
<div class="abs" style="left:995px;top:535px;width:29px;height:1px;background:#aca899"></div><div class="abs" style="left:995px;top:536px;width:29px;height:1px;background:#fff"></div>
<div class="pb" style="top:84px;background:#fbfaf5;border-left:1px solid #7d7b6d;border-top:1px solid #7d7b6d;border-right:1px solid #fff;border-bottom:1px solid #fff"><svg style="position:absolute;left:-1px;top:-1px;width:22px;height:21px" viewBox="998 84 22 21" shape-rendering="crispEdges"><g shape-rendering="geometricPrecision"><path d="M1005 89.500l7.500 2l-2 1.700l4.800 4.800l-1.800 1.800l-4.800-4.800l-1.700 2z" fill="#000"/></g></svg></div>
<div class="pb" style="top:105px"><svg style="position:absolute;left:-1px;top:-1px;width:22px;height:21px" viewBox="998 105 22 21" shape-rendering="crispEdges"><g shape-rendering="geometricPrecision" fill="none" stroke="#1414c8" stroke-width="1.200"><path d="M1005.500 111.500h4.500q4.500 0 4.500 4t-4.500 4h-4.500z"/><path d="M1002 113.500h3.500M1002 117.500h3.500M1014.500 115.500h3"/></g></svg></div>
<div class="pb" style="top:126px"><svg style="position:absolute;left:-1px;top:-1px;width:22px;height:21px" viewBox="998 126 22 21" shape-rendering="crispEdges"><path d="M1002 131.500h7.500v10h6.500" fill="none" stroke="#000"/></svg></div>
<div class="pb" style="top:147px"><svg style="position:absolute;left:-1px;top:-1px;width:22px;height:21px" viewBox="998 147 22 21" shape-rendering="crispEdges"><text x="1003.500" y="159" font-size="8.500" font-weight="bold" fill="#1414c8" style="font-family:'Liberation Sans',sans-serif">N1</text><rect x="1002" y="160" width="14" height="1" fill="#000"/></svg></div>
<div class="pb" style="top:168px"><svg style="position:absolute;left:-1px;top:-1px;width:22px;height:21px" viewBox="998 168 22 21" shape-rendering="crispEdges"><path d="M1002 174h7v8.500h7" fill="none" stroke="#000" stroke-width="3"/></svg></div>
<div class="pb" style="top:189px"><svg style="position:absolute;left:-1px;top:-1px;width:22px;height:21px" viewBox="998 189 22 21" shape-rendering="crispEdges"><g shape-rendering="geometricPrecision"><path d="M1002 199.500h13M1008.500 193v13" stroke="#e8a0e8" stroke-width="1"/><path d="M1008.500 196.500l3 3l-3 3l-3-3z" fill="#a020a0"/></g></svg></div>
<div class="pb" style="top:210px"><svg style="position:absolute;left:-1px;top:-1px;width:22px;height:21px" viewBox="998 210 22 21" shape-rendering="crispEdges"><rect x="1013" y="214" width="2" height="13" fill="#000"/><path d="M1005.500 224.500l7.500-7.500" stroke="#c02020" stroke-width="1.200" fill="none" shape-rendering="geometricPrecision"/></svg></div>
<div class="pb" style="top:231px"><svg style="position:absolute;left:-1px;top:-1px;width:22px;height:21px" viewBox="998 231 22 21" shape-rendering="crispEdges"><text x="1002" y="240" font-size="7" font-weight="bold" fill="#800000" style="font-family:'Liberation Mono',monospace" textLength="14" lengthAdjust="spacingAndGlyphs">PWR</text><g shape-rendering="geometricPrecision"><circle cx="1009" cy="243.500" r="1.800" fill="none" stroke="#000" stroke-width="1.100"/><path d="M1009 245.500v2.500" stroke="#000" stroke-width="1.200"/></g></svg></div>
<div class="pb" style="top:252px"><svg style="position:absolute;left:-1px;top:-1px;width:22px;height:21px" viewBox="998 252 22 21" shape-rendering="crispEdges"><text x="1002" y="261" font-size="7" font-weight="bold" fill="#008080" style="font-family:'Liberation Mono',monospace" textLength="14" lengthAdjust="spacingAndGlyphs">GND</text><path d="M1009.500 262v3M1003 265.500h13M1006 267.500h7M1008 269.500h3" stroke="#000" fill="none"/></svg></div>
<div class="pb" style="top:273px"><svg style="position:absolute;left:-1px;top:-1px;width:22px;height:21px" viewBox="998 273 22 21" shape-rendering="crispEdges"><rect x="1002.500" y="277.500" width="13" height="12" fill="#c8f8c8" stroke="#000"/><g fill="#108010"><rect x="1004" y="279" width="2" height="2"/><rect x="1012" y="279" width="2" height="2"/><rect x="1004" y="286" width="2" height="2"/><rect x="1012" y="286" width="2" height="2"/></g></svg></div>
<div class="pb" style="top:294px"><svg style="position:absolute;left:-1px;top:-1px;width:22px;height:21px" viewBox="998 294 22 21" shape-rendering="crispEdges"><path d="M1002.500 304.500l3-3h5.500v6h-5.500z" fill="none" stroke="#800000" stroke-width="1.200" shape-rendering="geometricPrecision"/><text transform="translate(1011.500,308) scale(.62,1)" font-size="10" font-weight="bold" fill="#000" style="font-family:'Liberation Sans',sans-serif">P</text></svg></div>
<div class="pb" style="top:315px"><svg style="position:absolute;left:-1px;top:-1px;width:22px;height:21px" viewBox="998 315 22 21" shape-rendering="crispEdges"><g fill="none" stroke="#fff" transform="translate(1,1)"><path d="M1002.500 320v12M1002.500 320.500h6"/><path d="M1004 326.500l3.500-3.500l3.500 3.500l-3.500 3.500z" shape-rendering="geometricPrecision"/><path d="M1013 322v8M1016.500 322v8M1013 326.500h3.500"/></g><g fill="none" stroke="#aca899"><path d="M1002.500 320v12M1002.500 320.500h6"/><path d="M1004 326.500l3.500-3.500l3.500 3.500l-3.500 3.500z" fill="#c8c5b5" shape-rendering="geometricPrecision"/><path d="M1013 322v8M1016.500 322v8M1013 326.500h3.500"/></g></svg></div>
<div class="pb" style="top:336px"><svg style="position:absolute;left:-1px;top:-1px;width:22px;height:21px" viewBox="998 336 22 21" shape-rendering="crispEdges"><g shape-rendering="geometricPrecision" fill="none" stroke="#000080" stroke-width="1"><path d="M1005.500 343l-3.500 3.500l3.500 3.500M1009.500 343l-3.500 3.500l3.500 3.500"/></g><text transform="translate(1011,350) scale(.62,1)" font-size="10" font-weight="bold" fill="#000" style="font-family:'Liberation Sans',sans-serif">C</text></svg></div>
<div class="pb" style="top:357px"><svg style="position:absolute;left:-1px;top:-1px;width:22px;height:21px" viewBox="998 357 22 21" shape-rendering="crispEdges"><rect x="1003" y="362" width="1" height="12" fill="#1414c8"/><rect x="1003" y="368" width="7" height="1" fill="#1414c8"/><path d="M1006.500 363l9 9.500M1015.500 363l-9 9.500" stroke="#20c020" stroke-width="1.300" fill="none" shape-rendering="geometricPrecision"/></svg></div>
<div class="pb" style="top:383px"><svg style="position:absolute;left:-1px;top:-1px;width:22px;height:21px" viewBox="998 383 22 21" shape-rendering="crispEdges"><path d="M1002.500 390l9.500 7.500" stroke="#000" stroke-width="1.100" fill="none" shape-rendering="geometricPrecision"/><rect x="1015" y="396" width="2" height="2" fill="#e8e800"/></svg></div>
<div class="pb" style="top:404px"><svg style="position:absolute;left:-1px;top:-1px;width:22px;height:21px" viewBox="998 404 22 21" shape-rendering="crispEdges"><rect x="1006" y="408" width="2" height="2" fill="#e8e800"/><path d="M1005 412l-1.500 3.500l4 3.500l7-7.500" stroke="#000" stroke-width="1.100" fill="none" shape-rendering="geometricPrecision"/></svg></div>
<div class="pb" style="top:425px"><svg style="position:absolute;left:-1px;top:-1px;width:22px;height:21px" viewBox="998 425 22 21" shape-rendering="crispEdges"><rect x="1002.500" y="429.500" width="13" height="12" fill="none" stroke="#000"/></svg></div>
<div class="pb" style="top:446px"><svg style="position:absolute;left:-1px;top:-1px;width:22px;height:21px" viewBox="998 446 22 21" shape-rendering="crispEdges"><ellipse cx="1009.200" cy="456.500" rx="5.800" ry="4" fill="none" stroke="#000" stroke-width="1.100" shape-rendering="geometricPrecision"/></svg></div>
<div class="pb" style="top:467px"><svg style="position:absolute;left:-1px;top:-1px;width:22px;height:21px" viewBox="998 467 22 21" shape-rendering="crispEdges"><path d="M1005.500 472q8.500 0 8.500 5.500t-8.500 5.800" fill="none" stroke="#000" stroke-width="1.100" shape-rendering="geometricPrecision"/></svg></div>
<div class="pb" style="top:488px"><svg style="position:absolute;left:-1px;top:-1px;width:22px;height:21px" viewBox="998 488 22 21" shape-rendering="crispEdges"><text x="1002.800" y="504" font-size="17.500" font-weight="bold" fill="#6a6ae6" stroke="#1010c8" stroke-width=".6" style="font-family:'Liberation Serif',serif">A</text></svg></div>
<div class="abs" style="left:0;top:745px;width:994px;height:21px;background:#ece9d8"></div>
<div class="abs" style="left:0px;top:748px;width:330px;height:17px;border-top:1px solid #aca899;border-left:1px solid #aca899;border-right:1px solid #fff;border-bottom:1px solid #fff"></div>
<div class="abs" style="left:332px;top:748px;width:424px;height:17px;border-top:1px solid #aca899;border-left:1px solid #aca899;border-right:1px solid #fff;border-bottom:1px solid #fff"></div>
<div class="abs" style="left:758px;top:748px;width:218px;height:17px;border-top:1px solid #aca899;border-left:1px solid #aca899;border-right:1px solid #fff;border-bottom:1px solid #fff"></div>
<div class="abs st" style="left:333px">0 items selected</div>
<div class="abs st" style="left:761px">Scale=244%</div>
<div class="abs st" style="left:851px">X=64.77</div>
<div class="abs st" style="left:906px">Y=229.11</div>
<div class="abs" style="left:976px;top:746px;width:19px;height:20px;background:#ece9d8"></div><svg class="abs" style="left:981px;top:751px" width="14" height="14"><path d="M13 3L3 13M13 7L7 13M13 11L11 13" stroke="#aca899" stroke-width="1.4"/><path d="M13 2L2 13M13 6L6 13M13 10L10 13" stroke="#fff" stroke-width="1"/></svg>
<div class="abs" style="left:0;top:766px;width:1024px;height:2px;background:#3a6ed5"></div>
</body></html>
